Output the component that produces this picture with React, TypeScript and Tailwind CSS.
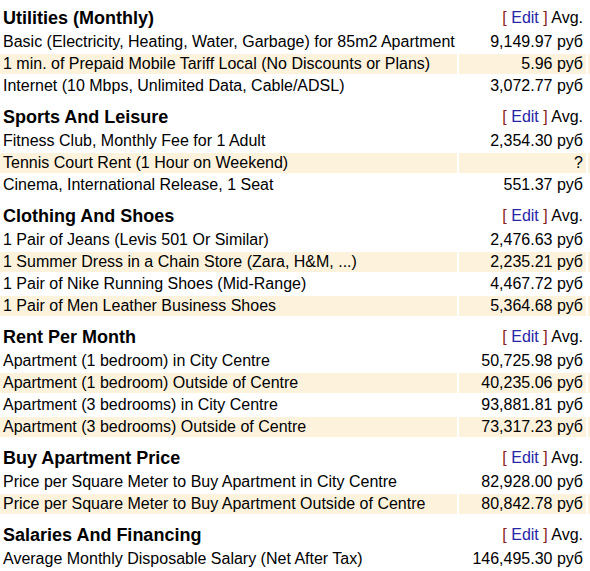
const sections = [
  {
    title: 'Utilities (Monthly)',
    rows: [
      ['Basic (Electricity, Heating, Water, Garbage) for 85m2 Apartment', '9,149.97 руб'],
      ['1 min. of Prepaid Mobile Tariff Local (No Discounts or Plans)', '5.96 руб'],
      ['Internet (10 Mbps, Unlimited Data, Cable/ADSL)', '3,072.77 руб'],
    ],
  },
  {
    title: 'Sports And Leisure',
    rows: [
      ['Fitness Club, Monthly Fee for 1 Adult', '2,354.30 руб'],
      ['Tennis Court Rent (1 Hour on Weekend)', '?'],
      ['Cinema, International Release, 1 Seat', '551.37 руб'],
    ],
  },
  {
    title: 'Clothing And Shoes',
    rows: [
      ['1 Pair of Jeans (Levis 501 Or Similar)', '2,476.63 руб'],
      ['1 Summer Dress in a Chain Store (Zara, H&M, ...)', '2,235.21 руб'],
      ['1 Pair of Nike Running Shoes (Mid-Range)', '4,467.72 руб'],
      ['1 Pair of Men Leather Business Shoes', '5,364.68 руб'],
    ],
  },
  {
    title: 'Rent Per Month',
    rows: [
      ['Apartment (1 bedroom) in City Centre', '50,725.98 руб'],
      ['Apartment (1 bedroom) Outside of Centre', '40,235.06 руб'],
      ['Apartment (3 bedrooms) in City Centre', '93,881.81 руб'],
      ['Apartment (3 bedrooms) Outside of Centre', '73,317.23 руб'],
    ],
  },
  {
    title: 'Buy Apartment Price',
    rows: [
      ['Price per Square Meter to Buy Apartment in City Centre', '82,928.00 руб'],
      ['Price per Square Meter to Buy Apartment Outside of Centre', '80,842.78 руб'],
    ],
  },
  {
    title: 'Salaries And Financing',
    rows: [['Average Monthly Disposable Salary (Net After Tax)', '146,495.30 руб']],
  },
];

export default function App() {
  return (
    <div className="w-[590px] h-[571px] overflow-hidden bg-white text-black font-['Liberation_Sans',Arial,sans-serif] text-[16px]">
      <div className="-mt-[1px] flex w-[640px] flex-col gap-[2px]">
        {sections.map((section) => (
          <div key={section.title} className="contents">
            <div className="flex h-[31px] items-end gap-[2px] pb-[1px] leading-[22px]">
              <div className="w-[457px] pl-[3px] text-[18px] font-bold">{section.title}</div>
              <div className="w-[127px] pr-[3px] text-right">
                <span className="text-[#8b1a1a]">[ </span>
                <a href="#" className="text-[#2626a8]">Edit</a>
                <span className="text-[#8b1a1a]"> ]</span> Avg.
              </div>
            </div>
            {section.rows.map(([label, value], i) => {
              const bg = i % 2 === 1 ? 'bg-[#fdf3dd]' : '';
              return (
                <div key={label} className="flex h-[20px] gap-[2px] leading-[20px]">
                  <div className={`w-[457px] pl-[3px] whitespace-nowrap ${bg}`}>{label}</div>
                  <div className={`w-[127px] pr-[3px] text-right whitespace-nowrap ${bg}`}>{value}</div>
                  <div className={`flex-1 ${bg}`} />
                </div>
              );
            })}
          </div>
        ))}
      </div>
    </div>
  );
}
